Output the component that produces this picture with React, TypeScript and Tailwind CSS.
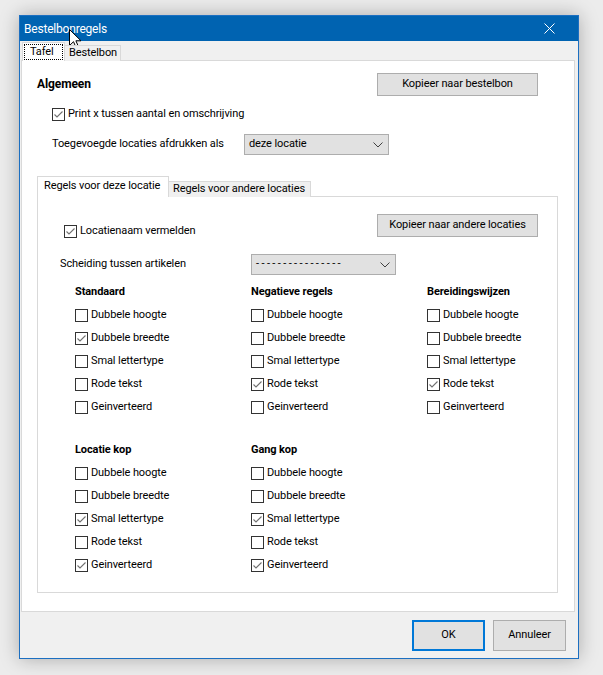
import React from "react";

function Check({ checked }: { checked?: boolean }) {
  return (
    <span className="w-[13px] h-[13px] border border-[#333333] bg-white flex items-center justify-center shrink-0">
      {checked && (
        <svg width="11" height="11" viewBox="0 0 11 11">
          <path d="M1.5 5.5L4 8L9.5 2.5" fill="none" stroke="#707070" strokeWidth="1.1" />
        </svg>
      )}
    </span>
  );
}

function CheckRow({ label, checked, className = "" }: { label: string; checked?: boolean; className?: string }) {
  return (
    <div className={`flex items-center gap-[3px] ${className}`}>
      <Check checked={checked} />
      <span className="whitespace-nowrap">{label}</span>
    </div>
  );
}

function Combo({ value, width, textClass = "" }: { value: string; width: string; textClass?: string }) {
  return (
    <div className={`${width} h-[21px] shrink-0 bg-[#e1e1e1] border border-[#adadad] flex items-center justify-between pl-[4px] pr-[5px]`}>
      <span className={`whitespace-nowrap ${textClass}`}>{value}</span>
      <svg width="10" height="6" viewBox="0 0 10 6">
        <path d="M0.5 0.5L5 5L9.5 0.5" fill="none" stroke="#404040" strokeWidth="1" />
      </svg>
    </div>
  );
}

function Button({ label, className = "" }: { label: string; className?: string }) {
  return (
    <div className={`bg-[#e1e1e1] border border-[#adadad] flex items-center justify-center whitespace-nowrap shrink-0 ${className}`}>
      {label}
    </div>
  );
}

type Opt = { label: string; checked?: boolean };

const opts = (checked: boolean[]): Opt[] =>
  ["Dubbele hoogte", "Dubbele breedte", "Smal lettertype", "Rode tekst", "Geinverteerd"].map((label, i) => ({
    label,
    checked: checked[i],
  }));

function Group({ title, items }: { title: string; items: Opt[] }) {
  return (
    <div className="w-[176px] shrink-0 flex flex-col">
      <div className="h-[23px] flex items-center font-bold whitespace-nowrap">{title}</div>
      {items.map((o) => (
        <CheckRow key={o.label} label={o.label} checked={o.checked} className="h-[23px]" />
      ))}
    </div>
  );
}

export default function App() {
  return (
    <div className="w-[603px] h-[675px] overflow-hidden bg-[#ececec] pt-[15px] pl-[19px] font-['Roboto',sans-serif] text-[11px] tracking-[-0.1px] text-black relative">
      <div className="w-[560px] h-[644px] border border-[#1c6fc1] bg-[#f0f0f0] flex flex-col shadow-[0_0_18px_rgba(0,0,0,0.28)]">
        {/* title bar */}
        <div className="h-[25px] bg-[#0063b1] flex items-center justify-between pl-[4px] text-white text-[12px] tracking-[-0.2px]">
          <span>Bestelbonregels</span>
          <div className="w-[58px] h-full flex items-center justify-center">
            <svg width="11" height="11" viewBox="0 0 11 11">
              <path d="M0.5 0.5L10.5 10.5M10.5 0.5L0.5 10.5" stroke="#ffffff" strokeWidth="1" />
            </svg>
          </div>
        </div>

        {/* tabs */}
        <div className="flex items-end h-[19px] mt-[1px] pl-[2px] relative z-10">
          <div className="w-[43px] h-[19px] bg-white border-l border-t border-r border-[#d9d9d9] p-px">
            <div className="w-full h-[16px] border border-dotted border-black flex items-center pl-[5px]">Tafel</div>
          </div>
          <div className="w-[56px] h-[16px] bg-[#f0f0f0] border-t border-r border-[#d9d9d9] flex items-center pl-[4px] whitespace-nowrap">
            Bestelbon
          </div>
        </div>

        {/* outer panel */}
        <div className="ml-px mr-[3px] h-[552px] -mt-px bg-white border border-[#d9d9d9] flex flex-col pl-[15px]">
          <div className="flex items-center h-[22px] mt-[12px]">
            <div className="w-[340px] font-bold text-[12px]">Algemeen</div>
            <Button label="Kopieer naar bestelbon" className="w-[161px] h-[23px]" />
          </div>
          <CheckRow label="Print x tussen aantal en omschrijving" checked className="h-[18px] mt-[10px] ml-[15px]" />
          <div className="flex items-center mt-[11px] ml-[15px]">
            <div className="w-[192px] whitespace-nowrap">Toegevoegde locaties afdrukken als</div>
            <Combo value="deze locatie" width="w-[145px]" />
          </div>

          {/* inner tabs */}
          <div className="flex items-end h-[21px] mt-[21px] relative z-10">
            <div className="w-[132px] h-[21px] bg-white border-l border-t border-r border-[#d9d9d9] flex items-center pl-[6px] pb-px whitespace-nowrap">
              Regels voor deze locatie
            </div>
            <div className="w-[142px] h-[16px] bg-[#f0f0f0] border-t border-r border-[#d9d9d9] flex items-center pl-[4px] whitespace-nowrap">
              Regels voor andere locaties
            </div>
          </div>

          {/* inner panel */}
          <div className="w-[521px] h-[397px] -mt-px border border-[#d9d9d9] flex flex-col">
            <div className="flex items-start h-[23px] mt-[17px] pl-[26px]">
              <CheckRow label="Locatienaam vermelden" checked className="w-[313px] h-[18px] mt-[8px]" />
              <Button label="Kopieer naar andere locaties" className="w-[161px] h-[23px]" />
            </div>
            <div className="flex items-center mt-[17px] pl-[22px]">
              <div className="w-[191px] whitespace-nowrap">Scheiding tussen artikelen</div>
              <Combo value="----------------" width="w-[145px]" textClass="tracking-[2.4px]" />
            </div>

            <div className="flex mt-[6px] pl-[37px]">
              <Group title="Standaard" items={opts([false, true, false, false, false])} />
              <Group title="Negatieve regels" items={opts([false, false, false, true, false])} />
              <Group title="Bereidingswijzen" items={opts([false, false, false, true, false])} />
            </div>
            <div className="flex mt-[20px] pl-[37px]">
              <Group title="Locatie kop" items={opts([false, false, true, false, true])} />
              <Group title="Gang kop" items={opts([false, false, true, false, true])} />
            </div>
          </div>
        </div>

        {/* footer */}
        <div className="flex justify-end gap-[8px] mt-[8px] pr-[12px]">
          <div className="w-[73px] h-[31px] bg-[#e1e1e1] border-2 border-[#0078d7] flex items-center justify-center">OK</div>
          <Button label="Annuleer" className="w-[73px] h-[31px]" />
        </div>
      </div>

      {/* mouse cursor */}
      <svg className="absolute left-[69px] top-[29px]" width="13" height="20" viewBox="0 0 13 20">
        <path d="M0.5 0.5V16.5L4.5 12.7L7 18.5L9.4 17.5L6.9 11.8H12Z" fill="#ffffff" stroke="#000000" strokeWidth="1" strokeLinejoin="round" />
      </svg>
    </div>
  );
}
